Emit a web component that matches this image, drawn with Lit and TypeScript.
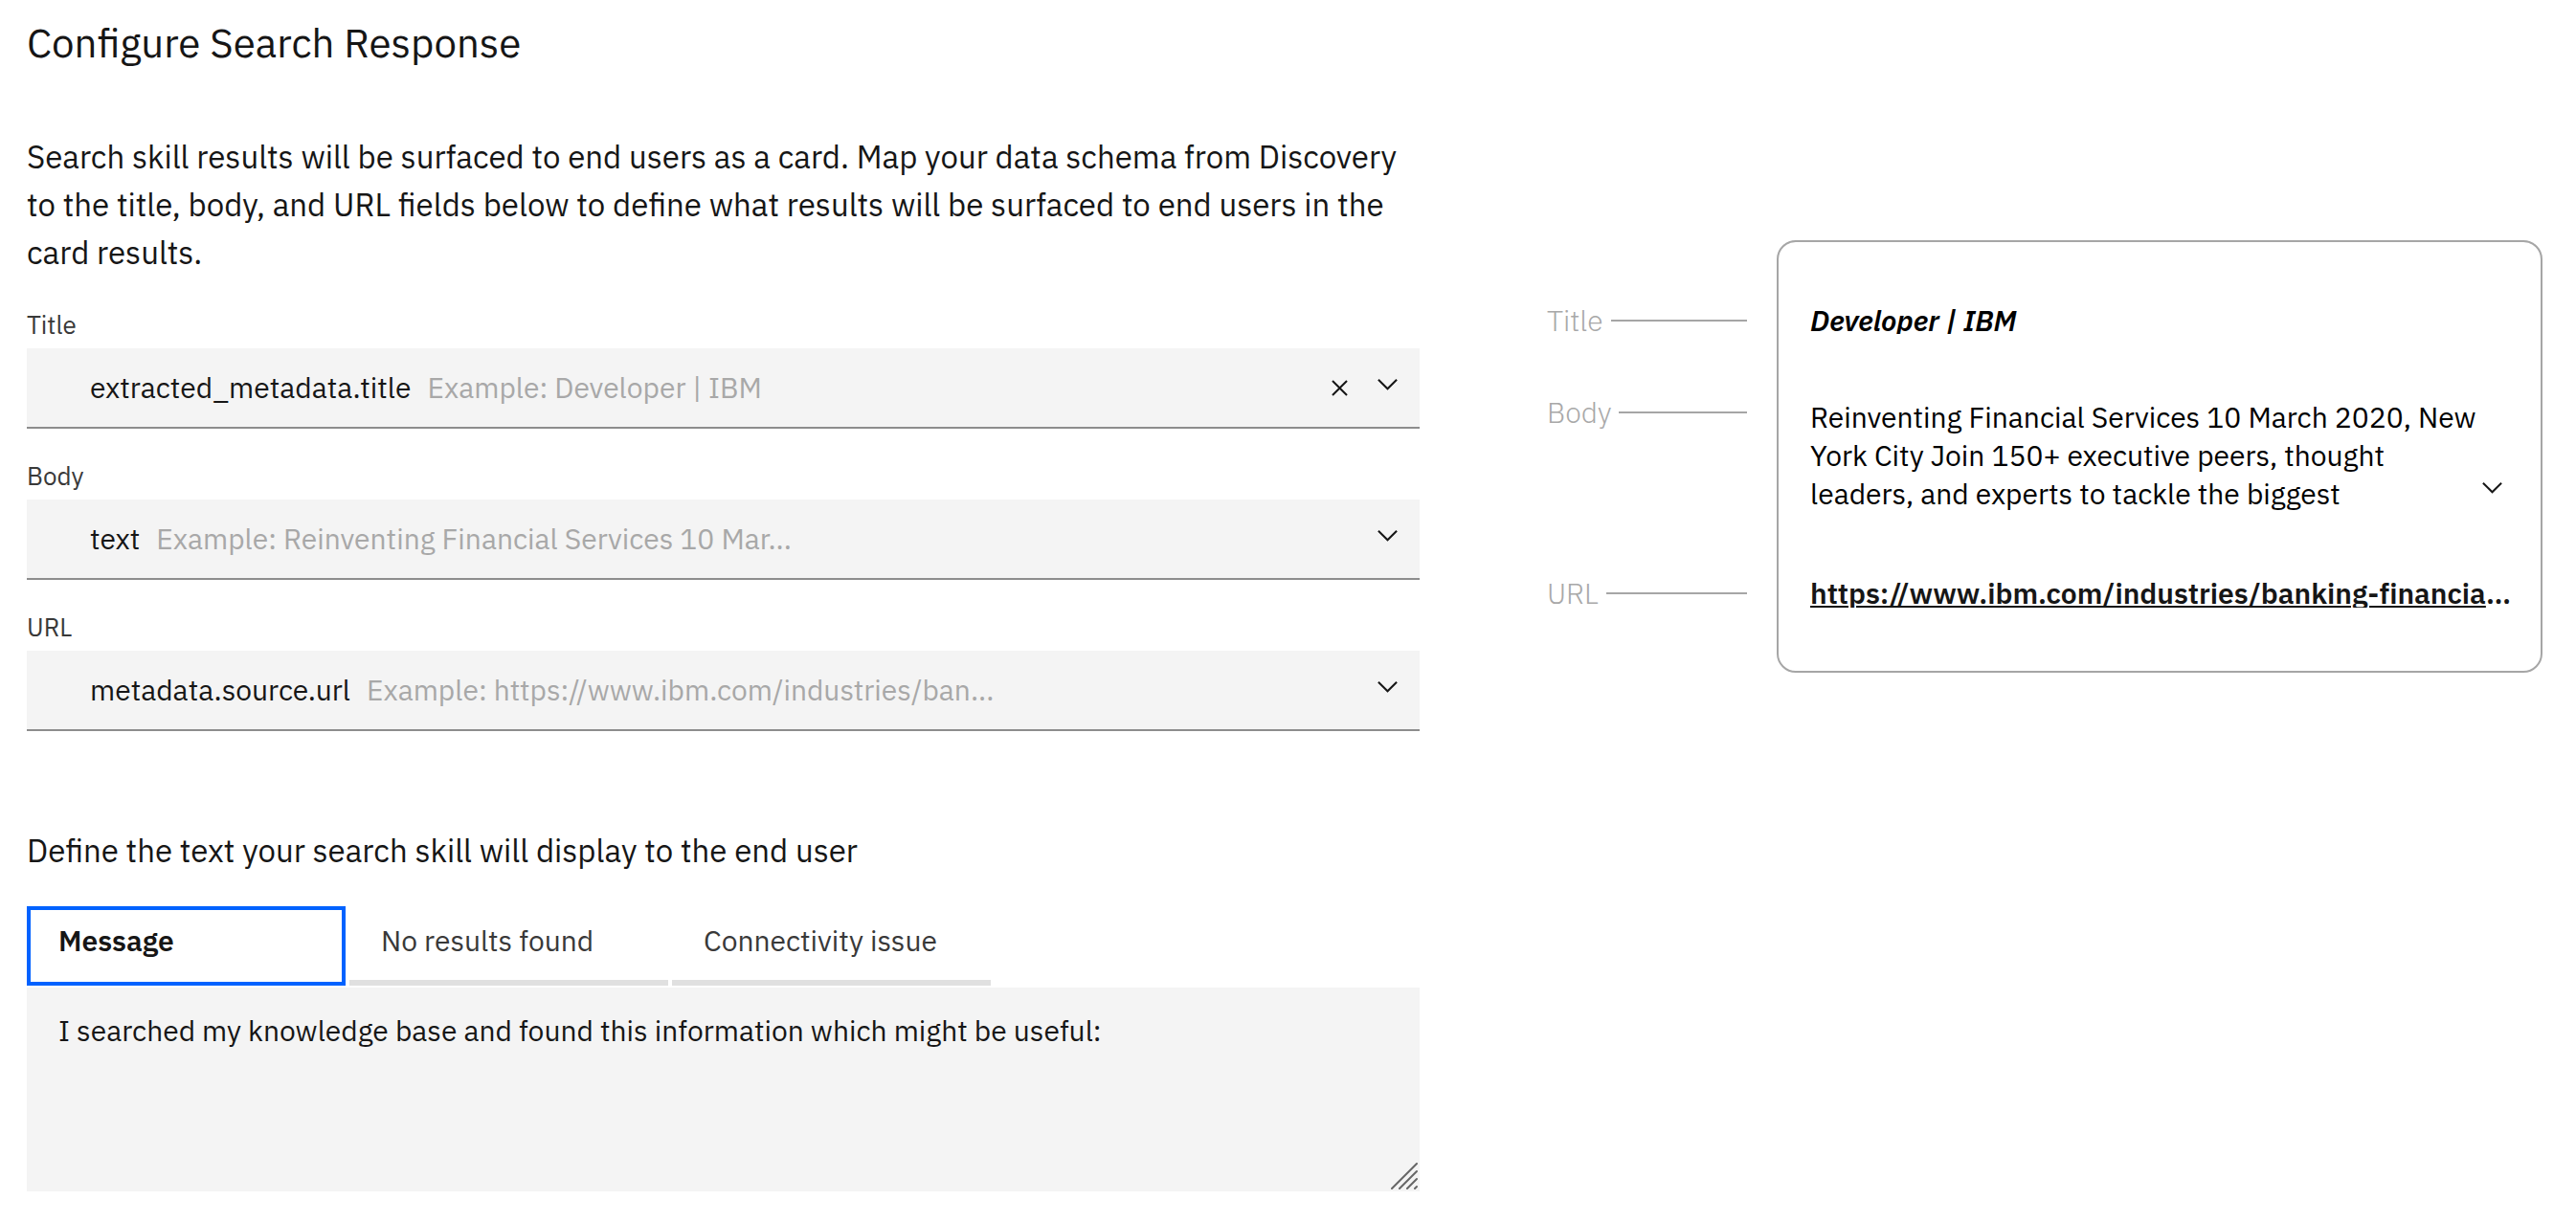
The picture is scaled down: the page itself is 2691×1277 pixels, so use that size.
import { LitElement, html, css, svg } from "lit";
import { customElement, property, state } from "lit/decorators.js";
import { classMap } from "lit/directives/class-map.js";

const chevronDown = html`<svg class="icon" viewBox="0 0 16 16" aria-hidden="true">
  ${svg`<path fill="currentColor" d="M8 11L3 6 3.7 5.3 8 9.6 12.3 5.3 13 6z"></path>`}
</svg>`;

const closeIcon = html`<svg class="icon" viewBox="0 0 16 16" aria-hidden="true">
  ${svg`<path fill="currentColor" d="M12 4.7L11.3 4 8 7.3 4.7 4 4 4.7 7.3 8 4 11.3 4.7 12 8 8.7 11.3 12 12 11.3 8.7 8z"></path>`}
</svg>`;

const shared = css`
  * {
    box-sizing: border-box;
  }
  .icon {
    display: block;
    width: 33px;
    height: 33px;
  }
  .icon-button {
    flex: none;
    padding: 0;
    border: 0;
    background: none;
    color: #161616;
    cursor: pointer;
  }
`;

@customElement("schema-field")
class SchemaField extends LitElement {
  static styles = [
    shared,
    css`
      :host {
        display: block;
      }
      .label {
        display: block;
        margin-bottom: 10px;
        font-size: 26px;
        line-height: 30px;
        color: #393939;
      }
      .field {
        display: flex;
        align-items: center;
        gap: 17px;
        height: 84px;
        padding: 0 17px 0 66px;
        background: #f4f4f4;
        border-bottom: 2px solid #8d8d8d;
        font-size: 30px;
        line-height: 40px;
      }
      .value {
        flex: none;
        appearance: none;
        field-sizing: content;
        margin: 0;
        padding: 0;
        border: 0;
        background: none;
        font: inherit;
        color: #161616;
      }
      .example {
        flex: 1;
        min-width: 0;
        overflow: hidden;
        white-space: nowrap;
        text-overflow: ellipsis;
        color: #a8a8a8;
      }
      .toggle {
        padding-bottom: 8px;
      }
    `,
  ];

  @property() label = "";
  @property() value = "";
  @property() example = "";
  @property({ type: Boolean }) clearable = false;

  private open() {
    const select = this.renderRoot.querySelector("select") as any;
    select?.showPicker?.();
  }

  render() {
    return html`
      <label class="label" for="value">${this.label}</label>
      <div class="field">
        <select class="value" id="value">
          <option>${this.value}</option>
        </select>
        <span class="example">Example: ${this.example}</span>
        ${this.clearable
          ? html`<button class="icon-button" type="button" aria-label="Clear selection">${closeIcon}</button>`
          : null}
        <button class="icon-button toggle" type="button" aria-label="Open menu" @click=${this.open}>
          ${chevronDown}
        </button>
      </div>
    `;
  }
}

@customElement("message-tabs")
class MessageTabs extends LitElement {
  static styles = [
    shared,
    css`
      :host {
        display: block;
      }
      .tabs {
        display: flex;
        gap: 4px;
        margin-bottom: 2px;
      }
      .tab {
        width: 333px;
        height: 83px;
        padding: 0 33px 6px;
        border: 0;
        border-bottom: 6px solid #e0e0e0;
        background: none;
        font: inherit;
        font-size: 30px;
        line-height: 40px;
        text-align: left;
        color: #393939;
        cursor: pointer;
      }
      .tab.selected {
        border-color: transparent;
        outline: 4px solid #0062ff;
        outline-offset: -4px;
        font-weight: 600;
        color: #161616;
      }
      .panel {
        position: relative;
      }
      .message {
        display: block;
        width: 100%;
        height: 213px;
        padding: 25px 33px;
        border: 0;
        border-radius: 0;
        background: #f4f4f4;
        font: inherit;
        font-size: 30px;
        line-height: 40px;
        color: #161616;
        resize: none;
      }
      .grip {
        position: absolute;
        right: 2px;
        bottom: 2px;
        width: 28px;
        height: 28px;
        pointer-events: none;
      }
    `,
  ];

  @state() private selected = 0;

  private names = ["Message", "No results found", "Connectivity issue"];

  render() {
    return html`
      <div class="tabs" role="tablist">
        ${this.names.map(
          (name, i) => html`<button
            class=${classMap({ tab: true, selected: i === this.selected })}
            type="button"
            role="tab"
            aria-selected=${i === this.selected ? "true" : "false"}
            @click=${() => (this.selected = i)}
          >${name}</button>`
        )}
      </div>
      <div class="panel" role="tabpanel">
        <textarea
          class="message"
          aria-label=${this.names[this.selected]}
          .value=${"I searched my knowledge base and found this information which might be useful:"}
        ></textarea>
        <svg class="grip" viewBox="0 0 28 28" aria-hidden="true">
          <path
            d="M1 27L27 1M9 27L27 9M17 27L27 17M25 27L27 25"
            stroke="#666"
            stroke-width="2"
            stroke-linecap="round"
          ></path>
        </svg>
      </div>
    `;
  }
}

@customElement("card-preview")
class CardPreview extends LitElement {
  static styles = [
    shared,
    css`
      :host {
        display: grid;
        grid-template-columns: 209px minmax(0, 1fr);
        gap: 31px;
        align-items: start;
        font-size: 30px;
        line-height: 40px;
      }
      .legend {
        display: flex;
        flex-direction: column;
        margin: 0;
        padding: 64px 0 0;
        list-style: none;
        color: #a8a8a8;
        font-weight: 300;
      }
      .entry {
        display: flex;
        align-items: center;
        gap: 8px;
      }
      .entry::after {
        content: "";
        flex: 1;
        height: 2px;
        background: #a6a6a6;
      }
      .body-entry {
        margin: 56px 0 149px;
      }
      .card {
        display: flex;
        flex-direction: column;
        padding: 68px 28px 66px 33px;
        border: 2px solid #a6a6a6;
        border-radius: 20px;
        background: #fff;
        color: #000;
      }
      .title,
      .link {
        margin: 0;
        overflow: hidden;
        font-size: 30px;
        font-weight: 600;
        white-space: nowrap;
        text-overflow: ellipsis;
      }
      .title {
        line-height: 28px;
        font-style: italic;
      }
      .link {
        line-height: 30px;
        font-variant-ligatures: none;
        color: #161616;
      }
      .link a {
        color: inherit;
        text-decoration: underline 2px;
        text-underline-offset: 2px;
      }
      .body {
        display: flex;
        align-items: flex-end;
        margin: 67px 0 69px;
        padding-right: 6px;
      }
      .text {
        flex: 1;
        margin: 0;
      }
      .expand {
        padding-bottom: 10px;
      }
    `,
  ];

  render() {
    return html`
      <ul class="legend">
        <li class="entry">Title</li>
        <li class="entry body-entry">Body</li>
        <li class="entry">URL</li>
      </ul>
      <article class="card">
        <h2 class="title">Developer | IBM</h2>
        <div class="body">
          <p class="text">
            Reinventing Financial Services 10 March 2020, New York City Join 150+ executive peers,
            thought leaders, and experts to tackle the biggest
          </p>
          <button class="icon-button expand" type="button" aria-label="Show more">${chevronDown}</button>
        </div>
        <p class="link">
          <a href="https://www.ibm.com/industries/banking-financial-markets"
            >https://www.ibm.com/industries/banking-financial-markets</a
          >
        </p>
      </article>
    `;
  }
}

@customElement("app-root")
class AppRoot extends LitElement {
  static styles = [
    shared,
    css`
      :host {
        display: block;
        min-height: 100vh;
        padding: 20px 35px 32px 28px;
        box-sizing: border-box;
        background: #fff;
        color: #161616;
        font-family: "IBM Plex Sans", Roboto, "Liberation Sans", sans-serif;
      }
      .heading {
        margin: 0 0 69px;
        font-size: 42px;
        font-weight: 400;
        line-height: 50px;
      }
      .layout {
        display: grid;
        grid-template-columns: minmax(0, 1455fr) minmax(0, 1040fr);
        gap: 133px;
        align-items: start;
      }
      .intro,
      .subheading {
        margin: 0;
        font-size: 33px;
        font-weight: 400;
        line-height: 50px;
      }
      .fields {
        display: flex;
        flex-direction: column;
        gap: 34px;
        margin: 35px 0 100px;
      }
      .subheading {
        margin-bottom: 33px;
      }
      .preview {
        margin-top: 112px;
      }
    `,
  ];

  render() {
    return html`
      <h1 class="heading">Configure Search Response</h1>
      <main class="layout">
        <section>
          <p class="intro">
            Search skill results will be surfaced to end users as a card. Map your data schema from
            Discovery to the title, body, and URL fields below to define what results will be
            surfaced to end users in the card results.
          </p>
          <div class="fields">
            <schema-field
              label="Title"
              value="extracted_metadata.title"
              example="Developer | IBM"
              clearable
            ></schema-field>
            <schema-field
              label="Body"
              value="text"
              example="Reinventing Financial Services 10 Mar..."
            ></schema-field>
            <schema-field
              label="URL"
              value="metadata.source.url"
              example="https://www.ibm.com/industries/ban..."
            ></schema-field>
          </div>
          <h2 class="subheading">Define the text your search skill will display to the end user</h2>
          <message-tabs></message-tabs>
        </section>
        <card-preview class="preview"></card-preview>
      </main>
    `;
  }
}
